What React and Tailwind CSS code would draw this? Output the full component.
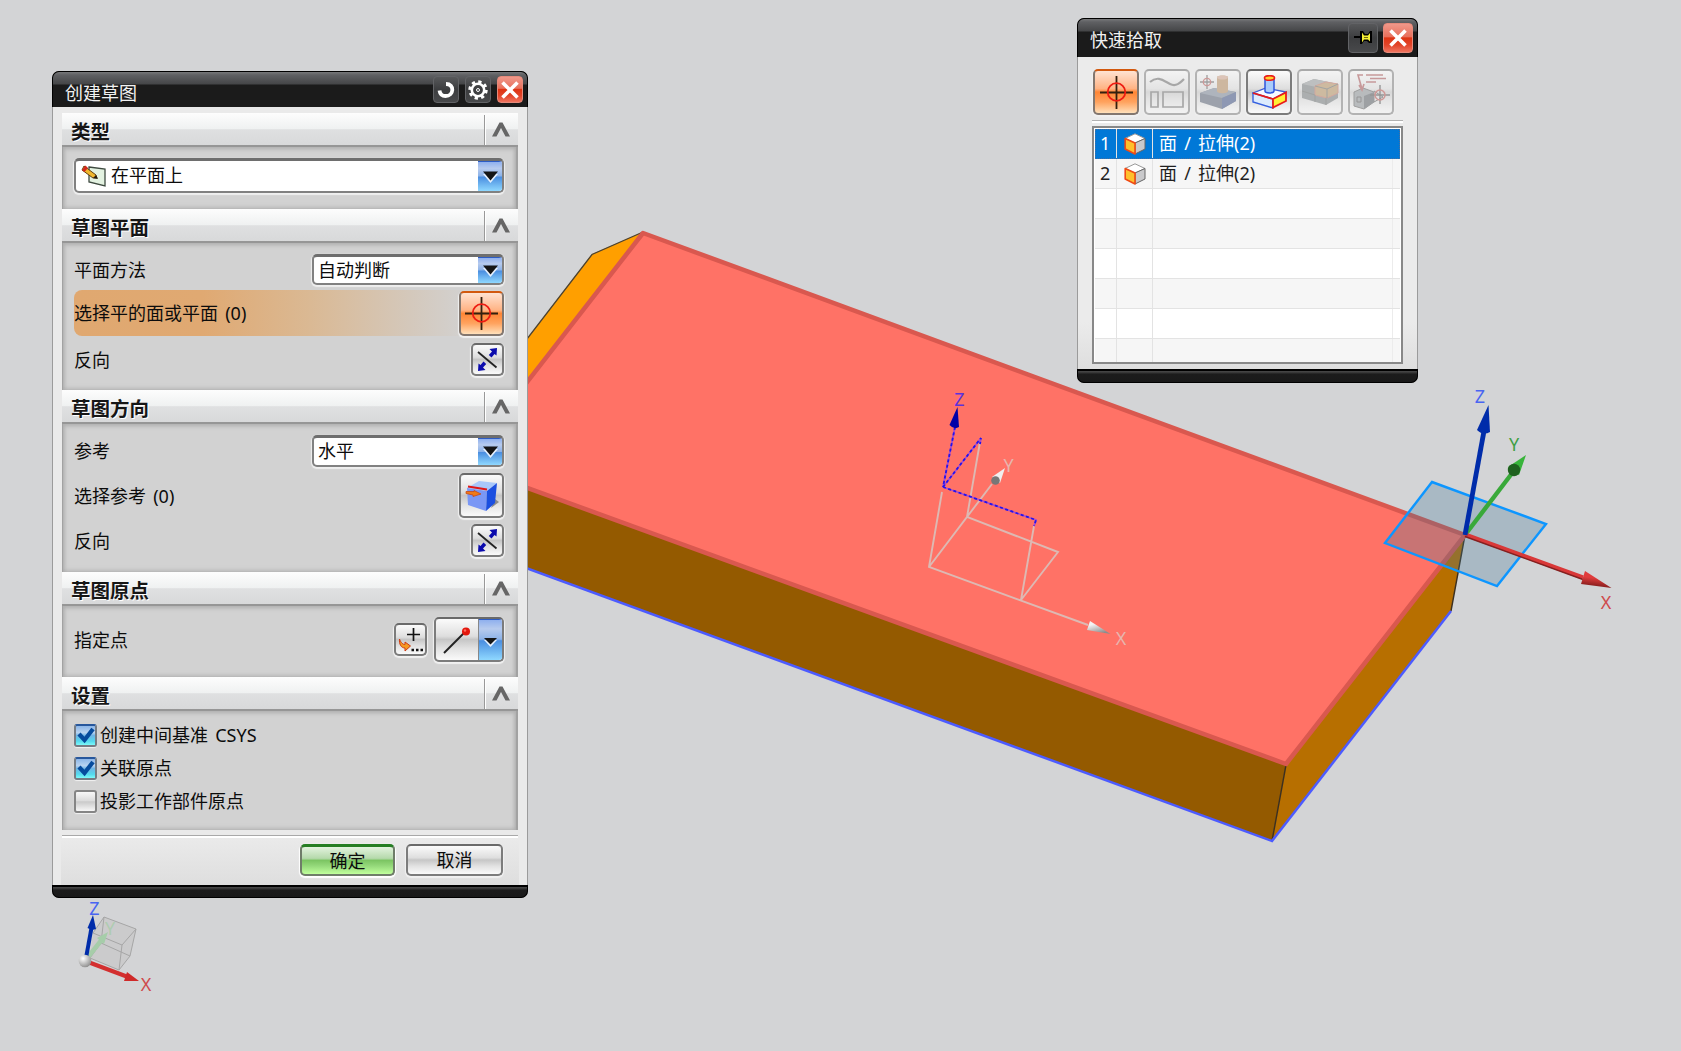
import React from "react";

const STEEL =
  "rounded-[5px] border-2 border-[#7c7c7c] border-t-[#6a6a6a] shadow-[0_1px_1px_1px_#f1f1f1] bg-[linear-gradient(#fbfbfb_0%,#dedede_42%,#c6c6c6_50%,#e2e2e2_72%,#fafafa_100%)]";
const ORANGE =
  "rounded-[5px] border-2 border-[#83776f] border-t-[#d2590f] shadow-[0_1px_1px_1px_#f1f1f1] bg-[linear-gradient(#ffe3d2_0%,#ffb384_42%,#ff8534_50%,#ffa35f_74%,#ffe0ba_100%)]";
const BLUE = "bg-[linear-gradient(#8fb0ee_0%,#b7cbee_22%,#8db3e8_48%,#4a8ee0_52%,#8fd8ff_100%)]";

function TitleButton({ className, children }) {
  return (
    <div
      className={`flex items-center justify-center rounded-[4px] border border-[#626366] bg-[linear-gradient(#57585a,#3c3d3f_50%,#48494b)] ${className}`}
    >
      {children}
    </div>
  );
}

function CloseButton({ className }) {
  return (
    <div
      className={`flex items-center justify-center rounded-[4px] border border-[#e58a7b] bg-[linear-gradient(#f0988a_0%,#e8705c_45%,#de3413_50%,#e2452a_75%,#f0745f_100%)] ${className}`}
    >
      <svg width="18" height="18" viewBox="0 0 18 18" stroke="#fff" strokeWidth="3.6">
        <path d="M1.5 1.5 16.5 16.5M16.5 1.5 1.5 16.5" />
      </svg>
    </div>
  );
}

function Crosshair() {
  return (
    <svg width="33" height="33" viewBox="0 0 33 33" fill="none">
      <path d="M16.5 0V33M0 16.5H33" stroke="#33200f" strokeWidth="1.800" />
      <circle cx="16.5" cy="16" r="8.800" stroke="#ee1c12" strokeWidth="1.800" />
    </svg>
  );
}

function Arrow({ className }) {
  return (
    <div className={`flex items-center justify-center border-t-2 border-[#2d5cc4] ${BLUE} ${className}`}>
      <svg width="17" height="14" viewBox="0 0 17 14">
        <path d="M1 4H16L8.500 13Z" fill="#e8f2ff" />
        <path d="M1 1.500H16L8.500 10.500Z" fill="#151515" />
      </svg>
    </div>
  );
}

function Combo({ className, children }) {
  return (
    <div
      className={`flex overflow-hidden rounded-[5px] border-2 border-[#818181] border-t-[3px] border-t-[#6e6e6e] bg-white shadow-[0_1px_1px_1px_#efefef] ${className}`}
    >
      <div className="flex flex-1 items-center">{children}</div>
      <Arrow className="-mt-px w-[24px]" />
    </div>
  );
}

function Section({ title, height, children }) {
  return (
    <section className={height}>
      <header className="flex h-[34px] border-b-2 border-[#969696] bg-[linear-gradient(#fdfdfd_0%,#eff1f1_50%,#dfe0e1_52%,#d8d9da_100%)]">
        <h2 className="flex-1 pl-[9px] pt-[2px] text-[19.500px] leading-[34px] font-bold text-[#161616] [text-shadow:1px_1px_0_#fff]">
          {title}
        </h2>
        <div className="mt-[2px] flex w-[34px] justify-center border-l border-[#999] pr-[2px] pt-[7px] shadow-[inset_1px_0_0_#fff]">
          <svg width="20" height="16" viewBox="0 0 20 16">
            <path d="M1 14.500 8.500 .500H11.500L19 14.500H14.500L10 6 5.500 14.500Z" fill="#666" />
          </svg>
        </div>
      </header>
      {children}
    </section>
  );
}

const BODY =
  "border-l border-r-2 border-[#a2a2a2] bg-[#d2d2d2] pl-[11px] pr-[12px] shadow-[inset_0_3px_4px_-1px_#b0b0b0,inset_-3px_0_4px_-2px_#aaa,inset_3px_0_4px_-2px_#aaa,inset_0_-4px_4px_-2px_#bdbdbd]";

function Reverse() {
  return (
    <div className={`flex h-[33px] w-[33px] items-center justify-center ${STEEL}`}>
      <svg width="23" height="25" viewBox="0 0 23 25">
        <path d="M2 5 20.500 20.500" stroke="#222" strokeWidth="1.800" />
        <path d="M21 1 20.500 8.500 18.500 7 15.500 10.500 12.800 8 16 4.500 13.500 2ZM2 24 2.500 16.500 4.500 18 7.500 14.500 10.200 17 7 20.500 9.500 23Z" fill="#0b0bad" />
      </svg>
    </div>
  );
}

function Check({ on, label }) {
  return (
    <div className="flex h-[33px] items-center gap-[3px]">
      <span
        className={`flex h-[23px] w-[23px] items-center justify-center rounded-[3px] border-2 shadow-[0_1px_1px_#f2f2f2] ${
          on
            ? "border-[#757c84] border-t-[#27579c] bg-[linear-gradient(#8cb6e8_0%,#b9d3f0_35%,#6fb4e6_50%,#53d9ee_80%,#7dfafa_100%)]"
            : "border-[#858585] bg-[linear-gradient(#f8f8f8_0%,#dcdcdc_45%,#cacaca_52%,#f7f7f7_100%)]"
        }`}
      >
        {on && (
          <svg width="18" height="17" viewBox="0 0 18 17">
            <path d="M2 7 7.500 13 16 2" fill="none" stroke="#064b9d" strokeWidth="4.200" />
          </svg>
        )}
      </span>
      <span>{label}</span>
    </div>
  );
}

function PlaneIcon() {
  return (
    <svg width="25" height="23" viewBox="0 0 25 23">
      <path d="M8 3 24 5V22L8 18Z" fill="#e3f2e1" stroke="#3e4a40" strokeWidth="1.300" />
      <path d="M3 2 15 11 16 14 12 14 1 6Z" fill="#f0b72e" stroke="#64400f" strokeWidth="1" />
      <path d="M1 6 4.500 1.500 7 4 3.500 8Z" fill="#d2281c" />
      <path d="M12 14 15 11 17 15Z" fill="#241a10" />
    </svg>
  );
}

function CubeIcon() {
  return (
    <svg width="34" height="34" viewBox="0 0 34 34">
      <path d="M26 29 34 23 30 20Z" fill="#8a8a8a" />
      <path d="M2 9 14 2 32 4 22 12Z" fill="#a9c8fa" />
      <path d="M2 9 22 12 21 32 3 26Z" fill="#7a97f5" />
      <path d="M22 12 32 4 30 24 21 32Z" fill="#1b4fe0" />
      <path d="M3 7.500 22 10.500" stroke="#e01818" strokeWidth="2" />
      <path d="M1 12.500H9V11.500L16 15 8 17.500V16L1 14.500Z" fill="#ef7a18" stroke="#c9400a" strokeWidth=".7" />
    </svg>
  );
}

function SketchDialog() {
  return (
    <div className="absolute left-[52px] top-[71px] flex h-[827px] w-[476px] flex-col overflow-hidden rounded-[7px] bg-[#1c1c1c]">
      <div className="flex h-[36px] shrink-0 border border-b-0 border-black bg-[linear-gradient(#77787a_0,#5f6063_3px,#454648_12px,#1b1b1b_13px,#1b1b1b_100%)] rounded-t-[7px] pl-[12px] pr-[4px]">
        <h1 className="flex-1 pt-[4px] text-[18px] leading-[34px] text-[#f1f1f1]">创建草图</h1>
        <div className="mt-[4px] flex gap-[6px]">
          <TitleButton className="h-[27px] w-[26px]">
            <svg width="18" height="18" viewBox="0 0 18 18" fill="none" stroke="#fff" strokeWidth="3.800">
              <path d="M9 3C18 3 17 15 8.500 15 5.500 15 3 13 2.500 9.500" />
            </svg>
          </TitleButton>
          <TitleButton className="h-[27px] w-[26px]">
            <svg width="20" height="20" viewBox="0 0 20 20" fill="none" stroke="#fff">
              <circle cx="10" cy="10" r="8" strokeWidth="3.400" strokeDasharray="3.140 3.140" />
              <circle cx="10" cy="10" r="6.200" strokeWidth="2.600" />
              <circle cx="10" cy="10" r="1.500" strokeWidth="1" />
            </svg>
          </TitleButton>
          <CloseButton className="h-[27px] w-[26px]" />
        </div>
      </div>

      <div className="flex h-[778px] shrink-0 flex-col border-x border-[#9b9b9b] bg-[#eaeaea] px-[9px] pt-[6px] text-[18px] text-[#0c0c0c] [word-spacing:2.500px]">
        <Section title="类型" height="h-[96px]">
          <div className={`h-[62px] pt-[11px] ${BODY}`}>
            <Combo className="h-[35px] w-full">
              <div className="flex items-center gap-[5px] pb-px pl-[5px]">
                <PlaneIcon />
                <span>在平面上</span>
              </div>
            </Combo>
          </div>
        </Section>

        <Section title="草图平面" height="h-[181px]">
          <div className={`h-[147px] pt-[11px] ${BODY}`}>
            <div className="flex h-[31px] items-center justify-between">
              <span className="pt-px">平面方法</span>
              <Combo className="h-[31px] w-[192px]"><span className="pl-[4px]">自动判断</span></Combo>
            </div>
            <div className="mt-[5px] flex h-[46px] items-center justify-between rounded-l-[8px] bg-[linear-gradient(90deg,#e0a870_0%,#e0a972_30%,#dab994_55%,#d4c8bb_78%,#d2d2d2_92%)]">
              <span className="pt-px">选择平的面或平面 (0)</span>
              <div className={`flex h-[45px] w-[45px] items-center justify-center ${ORANGE}`}>
                <Crosshair />
              </div>
            </div>
            <div className="mt-[7px] flex h-[33px] items-center justify-between">
              <span className="pt-px">反向</span>
              <Reverse />
            </div>
          </div>
        </Section>

        <Section title="草图方向" height="h-[182px]">
          <div className={`h-[148px] pt-[11px] ${BODY}`}>
            <div className="flex h-[32px] items-center justify-between">
              <span className="pt-px">参考</span>
              <Combo className="h-[32px] w-[192px]"><span className="pl-[4px]">水平</span></Combo>
            </div>
            <div className="mt-[6px] flex h-[45px] items-center justify-between">
              <span className="pt-px">选择参考 (0)</span>
              <div className={`flex h-[45px] w-[45px] items-center justify-center ${STEEL}`}>
                <CubeIcon />
              </div>
            </div>
            <div className="mt-[6px] flex h-[33px] items-center justify-between">
              <span className="pt-px">反向</span>
              <Reverse />
            </div>
          </div>
        </Section>

        <Section title="草图原点" height="h-[105px]">
          <div className={`h-[71px] pt-[11px] ${BODY}`}>
            <div className="flex h-[45px] items-center">
              <span className="flex-1 pt-px">指定点</span>
              <div className={`mr-[7px] flex h-[33px] w-[33px] items-center justify-center ${STEEL}`}>
                <svg width="26" height="26" viewBox="0 0 26 26">
                  <path d="M15.500 1V14M9 7.500H22" stroke="#111" strokeWidth="1.700" />
                  <path d="M1.500 12C1 17 3 21 7 21V24L12.500 19 7 15V17.500C5 17.500 3 16 1.500 12Z" fill="#f59a23" stroke="#cf3a12" strokeWidth="1" />
                  <path d="M13.500 23H16M18 23H20.500M22.500 23H25" stroke="#111" strokeWidth="2.600" />
                </svg>
              </div>
              <div className={`flex h-[45px] w-[70px] overflow-hidden ${STEEL}`}>
                <div className="flex flex-1 items-center justify-center">
                  <svg width="28" height="28" viewBox="0 0 28 28">
                    <path d="M1 27 23 5" stroke="#222" strokeWidth="2" />
                    <circle cx="23" cy="5.500" r="4" fill="#e3170d" />
                    <circle cx="22" cy="4.500" r="1.200" fill="#ff6d60" />
                  </svg>
                </div>
                <div className={`-mt-px flex w-[24px] items-center justify-center border-l border-t-2 border-[#2d5cc4] border-l-[#888] pt-[3px] ${BLUE}`}>
                  <svg width="13" height="10" viewBox="0 0 13 10">
                    <path d="M0 3H13L6.500 10Z" fill="#e8f2ff" />
                    <path d="M0 1H13L6.500 7.500Z" fill="#151515" />
                  </svg>
                </div>
              </div>
            </div>
          </div>
        </Section>

        <Section title="设置" height="h-[153px]">
          <div className={`h-[119px] pt-[8px] ${BODY}`}>
            <Check on label="创建中间基准 CSYS" />
            <Check on label="关联原点" />
            <Check label="投影工作部件原点" />
          </div>
        </Section>

        <div className="mt-[5px] h-[3px] border-b-2 border-t border-t-[#a9a9a9] border-b-white" />
        <div className="-mx-px flex h-[47px] justify-end gap-[11px] bg-[linear-gradient(#eaeaea,#dedede)] pr-[16px] pt-[6px] text-center leading-[28px]">
          <div className="h-[32px] w-[95px] rounded-[5px] border-2 border-[#6f7d69] border-t-[3px] border-t-[#267e24] bg-[linear-gradient(#e3f3df_0%,#b5d9ab_42%,#7cc563_50%,#95d97b_70%,#c0ff9c_100%)] shadow-[0_1px_1px_1px_#fff]">
            确定
          </div>
          <div className={`h-[32px] w-[97px] ${STEEL}`}>取消</div>
        </div>
      </div>
      <div className="h-[13px] shrink-0 rounded-b-[7px] border border-t-2 border-black bg-[linear-gradient(#4a4a4a_0,#333_2px,#1c1c1c_3px,#191919_100%)]" />
    </div>
  );
}

function CurveIcon() {
  return (
    <svg width="36" height="34" viewBox="0 0 36 34" fill="none" stroke="#666" strokeWidth="1.700">
      <path d="M1 7C9 0 15 6 21 9S31 8 35 4" strokeWidth="2.200" />
      <path d="M2 17H9V32H2ZM14 17H34V32H14Z" />
    </svg>
  );
}

function FeatureIcon() {
  return (
    <svg width="36" height="36" viewBox="0 0 36 36">
      <path d="M0 19 14 14 36 18V27L22 35 0 28Z" fill="#4f5a6c" />
      <path d="M0 19 14 14 36 18 22 24Z" fill="#737e90" />
      <path d="M22 24V35L36 27V18Z" fill="#33487c" />
      <path d="M17 3C17 1 28 1 28 3V17C28 20 17 20 17 17Z" fill="#b08455" />
      <ellipse cx="22.500" cy="3.500" rx="5.500" ry="2" fill="#cf9f86" />
      <path d="M7 1V15M0 8H14" stroke="#555" strokeWidth="1.300" />
      <circle cx="7" cy="8" r="3.700" fill="none" stroke="#b04a48" strokeWidth="1.300" />
    </svg>
  );
}

function FaceIcon() {
  return (
    <svg width="35" height="34" viewBox="0 0 35 34">
      <path d="M1 18 14 13 34 17 21 24Z" fill="#f7faff" stroke="#3c5bd6" strokeWidth="1.300" />
      <path d="M1 18 21 24V33L1 27Z" fill="#dcebfd" stroke="#3560e0" strokeWidth="1.400" />
      <path d="M21 24 34 17.500V26L21 32.500Z" fill="#ffef35" stroke="#ea1b1b" strokeWidth="1.800" />
      <path d="M1 18 21 24" stroke="#ea1b1b" strokeWidth="1.800" />
      <path d="M13 3V16C13 18.500 22 18.500 22 16V3Z" fill="#a8cbfb" stroke="#2d55dd" strokeWidth="1.500" />
      <ellipse cx="17.500" cy="3" rx="5" ry="2.300" fill="#ffd22e" stroke="#ea1b1b" strokeWidth="1.600" />
    </svg>
  );
}

function BodyIcon() {
  return (
    <svg width="37" height="28" viewBox="0 0 37 28">
      <path d="M0 6 12 1 36 6V20L24 27 0 20Z" fill="#6c7275" />
      <path d="M0 6 12 1 36 6 24 11Z" fill="#909596" />
      <path d="M13 8 24 4 36 6V15L25 20 13 17Z" fill="#b08a58" stroke="#bd6955" />
      <path d="M13 8 25 11 36 6M25 11V20M0 13 13 17M13 17V24M24 20V27" fill="none" stroke="#5a5e5c" />
    </svg>
  );
}

function NoteIcon() {
  return (
    <svg width="38" height="36" viewBox="0 0 38 36" fill="none">
      <path d="M2 18 11 14 22 18V28L12 35 2 32Z" fill="#868c91" stroke="#555" />
      <path d="M22 18 12 22V35L22 28Z" fill="#51585e" />
      <path d="M5 23H9V28H5ZM22 17 31 23 22 28" stroke="#444" />
      <path d="M11 1H6L10 15M7 11 10 16 12 10M14 1H31M18 4.500H34M14 8H24" stroke="#a4494b" strokeWidth="1.600" />
      <path d="M28 11V30M18 21H38" stroke="#444" strokeWidth="1.400" />
      <circle cx="28" cy="21" r="5" stroke="#b34a46" strokeWidth="1.500" />
    </svg>
  );
}

const TOOLS = [
  { icon: <Crosshair />, style: ORANGE },
  { icon: <CurveIcon />, muted: true },
  { icon: <FeatureIcon />, muted: true },
  { icon: <FaceIcon />, style: STEEL },
  { icon: <BodyIcon />, muted: true },
  { icon: <NoteIcon />, muted: true },
];

function BoxIcon() {
  return (
    <svg width="22" height="22" viewBox="0 0 22 22" strokeLinejoin="round">
      <path d="M1 5.500 11 .800 21 5.500 11 10Z" fill="#fff" stroke="#999" />
      <path d="M11 10 21 5.500V16L11 21Z" fill="#c9c9cb" stroke="#666" />
      <path d="M1.200 5.500 11 10V21L1.200 16Z" fill="#ffc02c" stroke="#f04a14" strokeWidth="1.600" />
    </svg>
  );
}

const ROWS = ["面 / 拉伸(2)", "面 / 拉伸(2)", null, null, null, null, null, null];

function QuickPick() {
  return (
    <div className="absolute left-[1077px] top-[18px] flex h-[365px] w-[341px] flex-col overflow-hidden rounded-[7px] bg-[#1c1c1c]">
      <div className="flex h-[39px] shrink-0 rounded-t-[7px] border border-b-0 border-black bg-[linear-gradient(#77787a_0,#5f6063_3px,#454648_12px,#1b1b1b_13px,#1b1b1b_100%)] pl-[12px] pr-[4px]">
        <h1 className="flex-1 pt-[3px] text-[18px] leading-[36px] text-[#f1f1f1]">快速拾取</h1>
        <div className="mt-[4px] flex gap-[5px]">
          <TitleButton className="h-[30px] w-[30px]">
            <svg width="18" height="14" viewBox="0 0 18 14">
              <path d="M0 6H7" stroke="#000" strokeWidth="2" />
              <path d="M6 0H9L11 3H14L16 0H18V12H15L13 10H10L8 13H6Z" fill="#000" />
              <path d="M8 1.500 10 4.500H14L16 2V10.500L14 8.500H10L8 11.500Z" fill="#f5ee35" />
              <path d="M10 6.500H14" stroke="#6b6614" strokeWidth="1" />
            </svg>
          </TitleButton>
          <CloseButton className="h-[30px] w-[30px]" />
        </div>
      </div>
      <div className="h-[312px] shrink-0 border-x border-[#9b9b9b] bg-[linear-gradient(#ebebeb_0%,#ebebeb_85%,#dedede_100%)] pl-[14px] pr-[14px] pt-[12px]">
        <div className="flex gap-[5px] pl-px">
          {TOOLS.map((tool, i) => (
            <div
              key={i}
              className={`flex h-[46px] w-[46px] shrink-0 items-center justify-center ${tool.style || STEEL} ${
                tool.muted ? "opacity-50" : ""
              }`}
            >
              {tool.icon}
            </div>
          ))}
        </div>
        <div className="mt-[5px] h-[3px] border-b-2 border-t border-b-white border-t-[#b2b2b2]" />
        <div className="mt-[3px] h-[238px] w-[311px] overflow-hidden border-2 border-[#888] bg-white px-px pt-px text-[18px] text-[#1f1f1f] [word-spacing:2.500px]">
          {ROWS.map((row, i) => (
            <div
              key={i}
              className={`flex h-[30px] border-b ${
                i === 0
                  ? "border-dotted border-[#d79c4d] bg-[#0078d7] text-white outline-1 outline-dotted -outline-offset-1 outline-[#4a6f9c]"
                  : i % 2
                  ? "border-[#e3e3e3] bg-[#f6f6f6]"
                  : "border-[#e3e3e3] bg-white"
              }`}
            >
              <div className="w-[22px] border-r border-solid border-[#e3e3e3] pl-[5px] leading-[29px]">{row && i + 1}</div>
              <div className="flex w-[36px] items-center justify-center border-r border-solid border-[#e3e3e3]">{row && <BoxIcon />}</div>
              <div className="flex-1 pl-[6px] leading-[29px]">{row}</div>
              <div className={`w-[8px] border-l border-solid ${i === 0 ? "border-[#0078d7]" : "border-[#ececec]"}`} />
            </div>
          ))}
        </div>
      </div>
      <div className="h-[14px] shrink-0 rounded-b-[7px] border border-t-2 border-black bg-[linear-gradient(#4a4a4a_0,#333_2px,#1c1c1c_3px,#191919_100%)]" />
    </div>
  );
}

function Scene() {
  return (
    <svg className="absolute inset-0" width="1681" height="1051" viewBox="0 0 1681 1051" fill="none">
      <defs>
        <linearGradient id="cone" x1="0" y1="0" x2="0.500" y2="1">
          <stop offset=".3" stopColor="#f4f4f4" />
          <stop offset="1" stopColor="#8d8d8d" />
        </linearGradient>
        <linearGradient id="redCone" x1=".5" y1="0" x2=".3" y2="1">
          <stop offset=".4" stopColor="#e03c3c" />
          <stop offset="1" stopColor="#6f1616" />
        </linearGradient>
        <radialGradient id="ball" cx=".35" cy=".3" r=".75">
          <stop offset="0" stopColor="#fff" />
          <stop offset="1" stopColor="#8c8c8c" />
        </radialGradient>
      </defs>

      <path d="M500 374 592 254 643 232 528 382 500 420Z" fill="#ff9f00" />
      <path d="M500 374 592 254.500 643 232" stroke="#4a4232" strokeWidth="1.300" />
      <path d="M500 479 1286 765 1272 841 500 559Z" fill="#945a00" />
      <path d="M1286 765 1465 535 1451 611 1272 841Z" fill="#b76f00" />
      <path d="M1286 765 1272 841M1465 535 1451 611" stroke="#3c3020" strokeWidth="1.400" />
      <path d="M500 558.500 1272 841 1451 611" stroke="#4c5bff" strokeWidth="2.500" />
      <path d="M500 417 643 233 1465 535 1286 764 500 478Z" fill="#ff7266" stroke="#d9584f" strokeWidth="4.500" strokeLinejoin="round" />

      <g stroke="#ddb9b3" strokeWidth="1.900">
        <path d="M942 492 929 567 1088 625M929 567 992 484M980 442 967 517 1058 552 1021 600 1034 526" />
      </g>
      <path d="M955 427 943 487M943 487 981 438 980 444M943 487 1036 520 1034 526" stroke="#a94ccc" strokeWidth="1.800" />
      <path d="M955 427 943 487M943 487 981 438 980 444M943 487 1036 520 1034 526" stroke="#2513e8" strokeWidth="1.800" strokeDasharray="3 2.500" />
      <path d="M957.500 407 949.500 425Q954 430 959 427Z" fill="#0000a8" />
      <path d="M1090 621 1110.500 634 1087 630Z" fill="url(#cone)" />
      <path d="M992 477 1005 468 1000 483Z" fill="#f0eeee" />
      <circle cx="995.500" cy="480.500" r="4.300" fill="#777" />

      <path d="M1432 482 1546 524 1497 586 1385 543Z" fill="#427798" fillOpacity=".29" stroke="#0d96ff" strokeWidth="2.400" />
      <path d="M1465 535 1513 472" stroke="#39a93a" strokeWidth="4.400" />
      <path d="M1526 455 1508 467 1519 475Z" fill="#38b43b" />
      <circle cx="1514" cy="470" r="6.200" fill="#1f611f" />
      <path d="M1465 534.500 1583 577.500" stroke="#d93838" strokeWidth="4.400" />
      <path d="M1465 536.500 1583 579.500" stroke="#842020" strokeWidth="1.400" />
      <path d="M1585 571 1611.500 588 1581 584Z" fill="url(#redCone)" />
      <path d="M1465 535 1484 431" stroke="#002caa" strokeWidth="4.800" />
      <path d="M1488.500 405 1477 430Q1483 436 1490 432Z" fill="#002caa" />

      <path d="M104 917 136 929 130 956 119 970 90 958 93 933Z" fill="#c7c7c8" fillOpacity=".7" />
      <path d="M104 917 136 929 122 945 93 933ZM104 917 101 943 130 956 136 929M122 945 119 970 90 958 101 943M119 970 130 956" stroke="#a6a6a6" />
      <path d="M88 957 104 937" stroke="#a6cda9" strokeWidth="4.500" />
      <path d="M108 932 97 938 104 944Z" fill="#a6cda9" />
      <path d="M86 958 92 925" stroke="#002caa" strokeWidth="4" />
      <path d="M93 915 87.500 928Q92 931 96 929Z" fill="#002caa" />
      <path d="M88 962 128 977" stroke="#d32f2f" strokeWidth="4.200" />
      <path d="M127 972 139 981 124 981Z" fill="#cf2929" />
      <circle cx="85" cy="961" r="6.300" fill="url(#ball)" />

      <g fontFamily="'Noto Sans',sans-serif" fontSize="18" textAnchor="middle">
        <text x="959.500" y="406" fill="#5c31dc">Z</text>
        <text x="1008.500" y="472" fill="#e7b5ae">Y</text>
        <text x="1121" y="645" fill="#e7b5ae">X</text>
        <text x="1480" y="403" fill="#4965f2">Z</text>
        <text x="1514" y="451" fill="#3f9f43">Y</text>
        <text x="1606" y="609" fill="#cf4b4d">X</text>
        <text x="94.500" y="915" fill="#4965f2">Z</text>
        <text x="110" y="935" fill="#afccb1">Y</text>
        <text x="146" y="991" fill="#cf4b4d">X</text>
      </g>
    </svg>
  );
}

export default function App() {
  return (
    <main className="relative h-[1051px] w-[1681px] overflow-hidden bg-[#d3d4d6] font-['Noto_Sans','Noto_Sans_CJK_SC',sans-serif] whitespace-nowrap">
      <Scene />
      <SketchDialog />
      <QuickPick />
    </main>
  );
}
